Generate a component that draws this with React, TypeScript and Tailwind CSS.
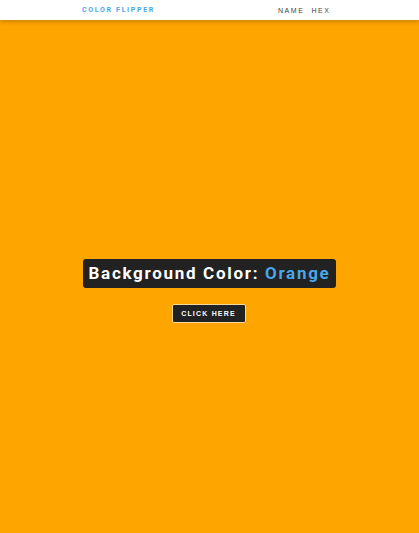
import { useState } from 'react';

const colors = [
    { name: 'Orange', value: '#ffa500' },
    { name: 'Red', value: '#ff0000' },
    { name: 'Green', value: '#008000' },
    { name: 'Blue', value: '#0000ff' },
];

export default function App() {
    const [index, setIndex] = useState(0);
    const color = colors[index];

    return (
        <div
            className="min-h-[533px] flex flex-col font-['Roboto',sans-serif]"
            style={{ backgroundColor: color.value }}
        >
            <nav className="h-5 bg-white shadow-[0_2px_4px_rgba(0,0,0,0.2)] flex items-center pt-px">
                <div className="w-[82px]" />
                <h4 className="text-[7px] font-bold tracking-[0.24em] text-[#49a6e9] leading-none w-[196px]">COLOR FLIPPER</h4>
                <ul className="flex gap-[7px] text-[7px] tracking-[0.22em] text-[#444] font-normal leading-none font-['Liberation_Sans',sans-serif]">
                    <li>NAME</li>
                    <li>HEX</li>
                </ul>
            </nav>

            <main className="flex-1 flex flex-col items-center justify-center pt-[29px]">
                <h2 className="bg-[#222] text-white rounded-[3px] px-[6px] h-[29px] flex items-center text-[17px] font-bold tracking-[0.1em] leading-none">
                    Background Color:&nbsp;<span className="text-[#49a6e9]">{color.name}</span>
                </h2>
                <button
                    onClick={() => setIndex((index + 1) % colors.length)}
                    className="mt-4 mr-[2px] w-[74px] h-[19px] bg-[#222] text-white border border-[#f5d9a0] rounded-[2px] text-[7px] font-black tracking-[0.17em] leading-none font-['Liberation_Sans',sans-serif]"
                >
                    CLICK HERE
                </button>
            </main>
        </div>
    );
}
